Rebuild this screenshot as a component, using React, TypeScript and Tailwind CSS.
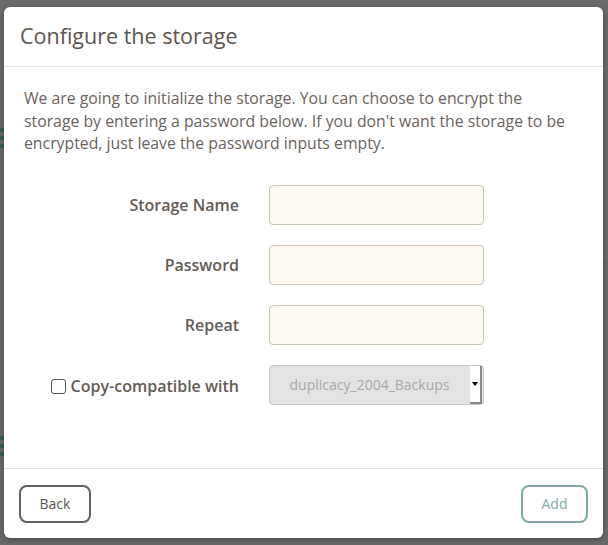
import React from "react";

export default function App() {
  return (
    <div
      className="relative w-[608px] h-[545px] overflow-hidden bg-[#6a6a6a]"
      style={{ fontFamily: "'Open Sans', Lato, sans-serif" }}
    >
      {/* faint underlying page */}
      <div className="absolute left-0 top-[128px] w-[10px] h-[24px] flex flex-col gap-[4px]">
        <div className="h-[4px] bg-[#3f5f4a]" />
        <div className="h-[4px] bg-[#3f5f4a]" />
        <div className="h-[4px] bg-[#3f5f4a]" />
      </div>
      <div className="absolute left-0 top-[436px] w-[10px] h-[24px] flex flex-col gap-[4px]">
        <div className="h-[4px] bg-[#3f5f4a]" />
        <div className="h-[4px] bg-[#3f5f4a]" />
        <div className="h-[4px] bg-[#3f5f4a]" />
      </div>
      <div className="absolute left-0 top-[179px] w-[608px] h-px bg-[#626262]" />
      <div className="absolute left-0 top-[263px] w-[608px] h-px bg-[#626262]" />
      <div className="absolute left-0 top-[282px] w-[608px] h-px bg-[#626262]" />

      {/* modal */}
      <div className="absolute left-[4px] top-[7px] w-[599px] h-[531px] bg-white rounded-[6px] flex flex-col shadow-[0_2px_6px_rgba(0,0,0,0.3)]">
        <div className="h-[60px] flex items-center px-[16px] border-b border-[#e2e2e2] shrink-0">
          <h1 className="text-[21.5px] text-[#5c5550]">Configure the storage</h1>
        </div>
        <div className="flex-1 px-[20px] pt-[20px]">
          <p className="text-[15.8px] leading-[22.5px] text-[#6b635e] w-[556px]">
            We are going to initialize the storage. You can choose to encrypt the storage by entering a password below. If you don't want the storage to be encrypted, just leave the password inputs empty.
          </p>
          <div className="mt-[30px] flex flex-col gap-[20px]">
            {["Storage Name", "Password", "Repeat"].map((l) => (
              <div key={l} className="flex items-center h-[40px]">
                <label className="w-[215px] text-right text-[16px] font-semibold text-[#645c57]">{l}</label>
                <input
                  type={l === "Storage Name" ? "text" : "password"}
                  className="ml-[30px] w-[215px] h-[40px] bg-[#fffaf0] border border-[#cbc4b9] rounded-[4px] outline-none"
                />
              </div>
            ))}
            <div className="flex items-center h-[40px]">
              <div className="w-[215px] flex justify-end items-center gap-[5px] pt-[3px]">
                <span className="w-[15px] h-[15px] border border-[#555] rounded-[3px] bg-white" />
                <span className="text-[16px] font-semibold text-[#645c57]">Copy-compatible with</span>
              </div>
              <div className="ml-[30px] w-[215px] h-[40px] bg-[#e3e3e3] border border-[#cbc4b9] rounded-[4px] flex items-center relative">
                <span className="flex-1 text-center text-[14px] text-[#a9a9a9] pr-[14px]">duplicacy_2004_Backups</span>
                <div className="absolute right-[1px] top-[0px] w-[12px] h-[38px] bg-white border-r-2 border-b-2 border-[#8a8a8a] flex items-center justify-center">
                  <svg width="6" height="4" viewBox="0 0 6 4"><path d="M0 0h6L3 4z" fill="#000" /></svg>
                </div>
              </div>
            </div>
          </div>
        </div>
        <div className="h-[70px] border-t border-[#e2e2e2] flex items-center justify-between px-[15px] shrink-0">
          <button className="w-[72px] h-[38px] border-2 border-[#665e59] rounded-[8px] text-[14px] text-[#5c5550] bg-white">Back</button>
          <button className="w-[67px] h-[38px] border-2 border-[#7fa8a8] rounded-[8px] text-[14px] text-[#7fa8a8] bg-white">Add</button>
        </div>
      </div>
    </div>
  );
}
